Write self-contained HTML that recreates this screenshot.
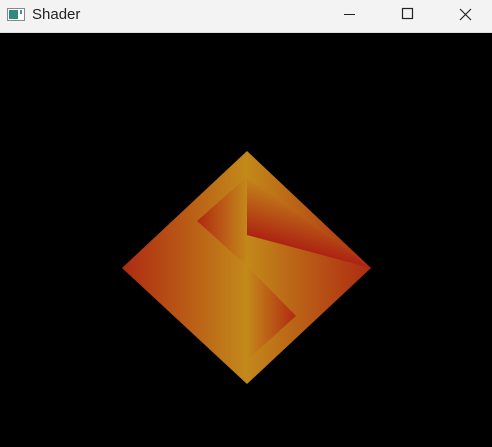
<!DOCTYPE html>
<html><head><style>
html,body{margin:0;padding:0;width:492px;height:447px;overflow:hidden;background:#000;}
.tb{position:absolute;left:0;top:0;width:492px;height:32px;background:#f3f3f3;border-bottom:1px solid #ddd;}
.title{position:absolute;left:32px;top:6px;font:15px "Liberation Sans",sans-serif;color:#222;}
</style></head><body>
<div class="tb">
<svg width="492" height="32" style="position:absolute;left:0;top:0">
<rect x="7.5" y="8.5" width="17" height="12" fill="#fff" stroke="#888"/>
<rect x="9" y="10" width="9" height="9" fill="#2e8a7a"/>
<rect x="20" y="10" width="2" height="4" fill="#4a8ab0"/>
<line x1="344" y1="14.5" x2="355" y2="14.5" stroke="#222" stroke-width="1"/>
<rect x="402.5" y="8.5" width="10" height="10" fill="none" stroke="#222" stroke-width="1.2"/>
<path d="M460 9 L471 20 M471 9 L460 20" stroke="#222" stroke-width="1.2"/>
</svg>
<div class="title">Shader</div>
</div>
<svg width="492" height="447" style="position:absolute;left:0;top:0">
<defs>
<linearGradient id="base" gradientUnits="userSpaceOnUse" x1="122" y1="0" x2="371" y2="0">
<stop offset="0" stop-color="#ae2a12"/><stop offset="0.5" stop-color="#c3891a"/><stop offset="1" stop-color="#ae2a12"/>
</linearGradient>
<linearGradient id="lt" gradientUnits="userSpaceOnUse" x1="197" y1="0" x2="247" y2="0">
<stop offset="0" stop-color="#b02812"/><stop offset="1" stop-color="#c3891a"/>
</linearGradient>
<linearGradient id="rt" gradientUnits="userSpaceOnUse" x1="247" y1="0" x2="297" y2="0">
<stop offset="0" stop-color="#c3891a"/><stop offset="1" stop-color="#b02812"/>
</linearGradient>
<linearGradient id="ur" gradientUnits="userSpaceOnUse" x1="247" y1="177" x2="232.6" y2="231.2">
<stop offset="0" stop-color="#c3861a"/><stop offset="1" stop-color="#ad2312"/>
</linearGradient>
</defs>
<polygon points="247,151 371,268 247,384 122,268" fill="url(#base)"/>
<polygon points="247,177 371,268 247,235" fill="url(#ur)"/>
<polygon points="247,177 197,221 247,266" fill="url(#lt)"/>
<polygon points="247,266 296,316 247,360" fill="url(#rt)"/>
</svg>
</body></html>
